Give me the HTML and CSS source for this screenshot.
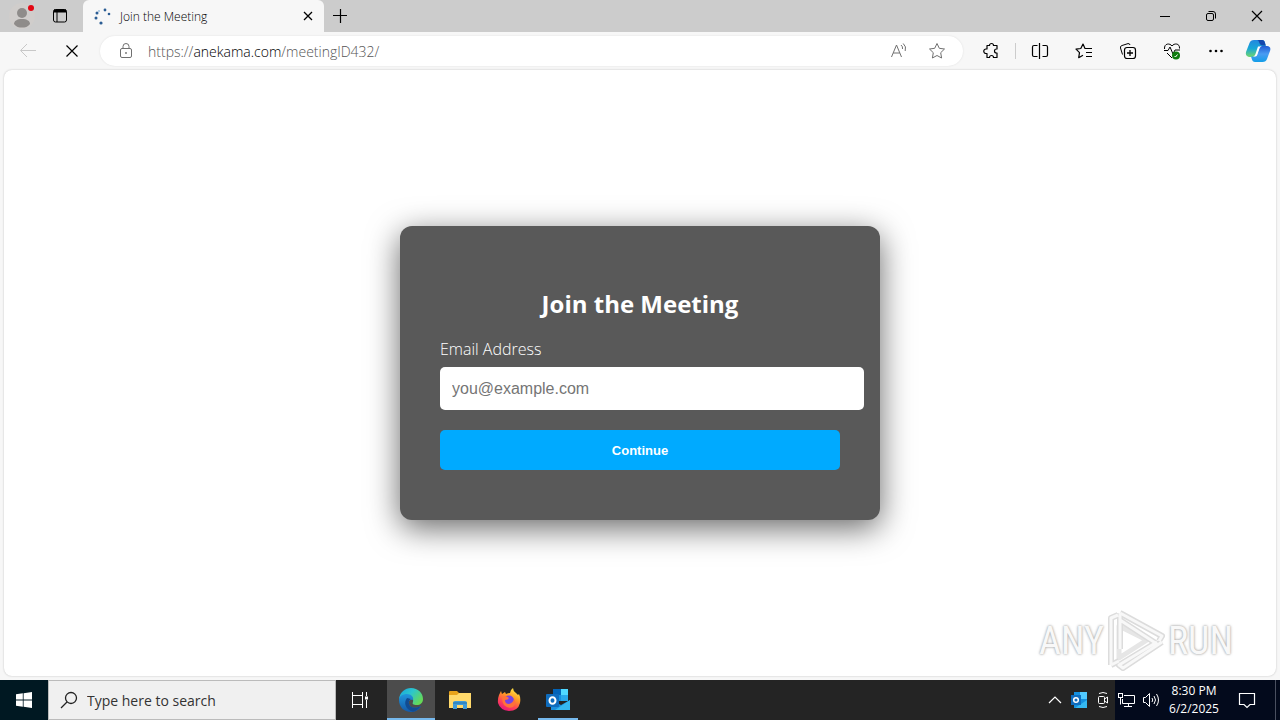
FILE: index.html
```
<!DOCTYPE html>
<html lang="en">
<head>
<meta charset="UTF-8">
<meta name="viewport" content="width=device-width, initial-scale=1.0">
<title>Join the Meeting</title>
<link rel="stylesheet" href="styles.css">
</head>
<body>
<div class="desktop">

  <!-- Tab strip -->
  <header class="tab-strip">
    <button class="profile" aria-label="Profile">
      <svg width="28" height="28" viewBox="0 0 28 28"><circle cx="14" cy="14" r="13" fill="#d0cdcb"/><circle cx="14" cy="11" r="5" fill="#8f8c8a"/><path d="M6 22c0-3 3-5 8-5s8 2 8 5c-2 3-5 3.500-8 3.500S8 25 6 22z" fill="#8f8c8a"/><circle cx="23" cy="6" r="3" fill="#e30613"/></svg>
    </button>
    <button class="tab-actions" aria-label="Tab actions">
      <svg class="line" width="16" height="16" viewBox="0 0 16 16"><rect x="1.500" y="1.500" width="13" height="12.500" rx="2"/><path d="M1.500 3.500h13M5 4v10" /><path d="M2 3h12" stroke-width="3"/></svg>
    </button>
    <div class="tab">
      <svg width="18" height="18" viewBox="0 0 18 18" fill="#2b5d94"><circle cx="3" cy="6" r="1.500"/><circle cx="2" cy="11" r="1.500"/><circle cx="7" cy="16" r="1.600"/><circle cx="11" cy="3" r="1.400"/><circle cx="15" cy="7" r="1.300"/><circle cx="5" cy="4" r="1" fill="#9fc1df"/></svg>
      <span class="tab-title">Join the Meeting</span>
      <button class="tab-close" aria-label="Close tab"><svg class="line" width="10" height="10" viewBox="0 0 10 10"><path d="M1 1l8 8M9 1l-8 8" stroke-width="1.300"/></svg></button>
    </div>
    <button class="new-tab" aria-label="New tab"><svg class="line" width="16" height="16" viewBox="0 0 16 16"><path d="M8.500 1v14M1 7.500h14" stroke-width="1.200"/></svg></button>
    <div class="window-buttons">
      <button aria-label="Minimize"><svg class="line" width="12" height="12" viewBox="0 0 12 12"><path d="M1 6.500h10"/></svg></button>
      <button aria-label="Restore"><svg class="line" width="12" height="12" viewBox="0 0 12 12"><rect x="1.500" y="3.500" width="7" height="7" rx="1.500"/><path d="M3.500 1.500H8q2.500 0 2.500 2.500v4.500"/></svg></button>
      <button aria-label="Close"><svg class="line" width="12" height="12" viewBox="0 0 12 12"><path d="M1 1l10 10M11 1L1 11" stroke-width="1.200"/></svg></button>
    </div>
  </header>

  <!-- Toolbar -->
  <nav class="toolbar">
    <button class="tool back" aria-label="Back"><svg class="line" width="18" height="16" viewBox="0 0 18 16"><path d="M17 7.500H2M8 1L1.500 7.500 8 14"/></svg></button>
    <button class="tool" aria-label="Stop"><svg class="line" width="14" height="14" viewBox="0 0 14 14"><path d="M1.500 1.500l11 11M12.500 1.500l-11 11" stroke-width="1.200"/></svg></button>
    <div class="address">
      <svg class="line lock" width="16" height="18" viewBox="0 0 16 18"><rect x="2.500" y="6.500" width="11" height="9" rx="1.500"/><path d="M5 6.500V4.500a3 3 0 0 1 6 0v2"/><circle cx="8" cy="11" r=".6"/></svg>
      <a class="url" href="#">https://<span class="host">anekama.com</span>/meetingID432/</a>
      <button aria-label="Read aloud"><svg class="line" width="18" height="18" viewBox="0 0 18 18"><path d="M1.500 15L6.500 3l5 12M3.200 11h6.600M11 3q2 1.500 1.500 4M13.200 1.500q3.500 3 2 7.500"/></svg></button>
      <button aria-label="Add to favorites"><svg class="line" width="18" height="18" viewBox="0 0 18 18"><path d="M9 1.500l2.300 4.800 5.200.7-3.800 3.700.9 5.300L9 13.500 4.400 16l.9-5.300L1.500 7l5.200-.7z" stroke-linejoin="round"/></svg></button>
    </div>
    <div class="tools">
      <button class="tool" aria-label="Extensions"><svg class="line" width="18" height="18" viewBox="0 0 18 18"><path d="M5 3.500h2.500a2 2 0 0 1 4 0H15V7h-.5a2 2 0 0 0 0 4h.5v4.500h-3.500a2 2 0 0 0-4 0H5V11.500H4a2.200 2.200 0 0 1 0-4.500h1z" stroke-linejoin="round" stroke-width="1.200"/></svg></button>
      <span class="divider"></span>
      <button class="tool" aria-label="Split screen"><svg class="line" width="18" height="18" viewBox="0 0 18 18"><path d="M6.500 3.500H3Q1.500 3.500 1.500 5v8q0 1.500 1.500 1.500h3.500M11.500 3.500H15q1.500 0 1.500 1.500v8q0 1.500-1.500 1.500h-3.500M8.500 1v16" stroke-width="1.200"/></svg></button>
      <button class="tool" aria-label="Favorites"><svg class="line" width="18" height="18" viewBox="0 0 18 18"><path d="M17 6.500h-7L8 2 5.800 6.500 1 7.200l3.500 3.500-.8 5L8 13.200M11 10.500h6M11 14.500h6" stroke-linejoin="round" stroke-width="1.200"/></svg></button>
      <button class="tool" aria-label="Collections"><svg class="line" width="18" height="18" viewBox="0 0 18 18"><path d="M3.500 12.500L1.500 6q-.5-2 1.500-2.500L9 1.600q1.600-.3 2 1.400"/><rect x="5.500" y="5.500" width="11" height="11" rx="2.500" stroke-width="1.200"/><path d="M11 8v6M8 11h6" stroke-width="1.300"/></svg></button>
      <button class="tool" aria-label="Browser essentials"><svg class="line" width="18" height="18" viewBox="0 0 18 18"><path d="M1.500 7C1 1 7 1 9 4c2-3 8-3 7.500 2.500M4 11l5 5M1 8.500h4L7 5l3 7 2-4h5" stroke-linejoin="round"/><circle cx="13" cy="13.500" r="4" fill="#107c10" stroke="none"/><path d="M11.500 14l1 1 2-2.500" stroke="#fff"/></svg></button>
      <button class="tool" aria-label="Settings and more"><svg width="18" height="18" viewBox="0 0 18 18"><circle cx="3.500" cy="9" r="1.300"/><circle cx="9" cy="9" r="1.300"/><circle cx="14.500" cy="9" r="1.300"/></svg></button>
      <button class="copilot" aria-label="Copilot">
        <svg width="26" height="24" viewBox="0 0 26 24">
          <defs>
            <linearGradient id="cop1" x1="0" y1="0" x2="0" y2="1"><stop offset="0" stop-color="#2387df"/><stop offset=".5" stop-color="#18a7d7"/><stop offset="1" stop-color="#72d66c"/></linearGradient>
            <linearGradient id="cop2" x1="0" y1="0" x2="0" y2="1"><stop offset="0" stop-color="#215bd4"/><stop offset=".5" stop-color="#4a9cf2"/><stop offset="1" stop-color="#139ee8"/></linearGradient>
          </defs>
          <path d="M9 1h8q2.500 0 3 3l.8 3h-4q-2 0-2.800 2l-2.500 7q-.7 2-3 2H4q-4-1-3-5L4.500 4Q5.500 1 9 1z" fill="url(#cop1)"/>
          <path d="M17 1q2.500 0 3 3l.8 2.500H18q-3 0-4-3.500-.5-2-2-2z" fill="#1447ad"/>
          <path d="M17 7h5q4.500.5 3 5l-3 8q-1 3-4.500 3H10q-2.500 0-3.200-3L6 17.500h3q2.300 0 3-2l2.300-6.500q.7-2 2.700-2z" fill="url(#cop2)"/>
          <path d="M13 7.500h3.500q-1.500.5-2 2l-2.300 6.500q-.6 1.500-2.200 1.500H8q1.800-.5 2.300-2l2-6z" fill="#fff"/>
        </svg>
      </button>
    </div>
  </nav>

  <!-- Web page -->
  <main class="page">
    <form class="card">
      <h2>Join the Meeting</h2>
      <label for="email">Email Address</label>
      <input type="email" id="email" name="email" placeholder="you@example.com">
      <button type="button" class="continue">Continue</button>
    </form>
    <div class="watermark">
      <span>ANY</span>
      <svg width="60" height="64" viewBox="0 0 60 64" fill="none" stroke-linejoin="round">
        <path d="M13 17v32l28-18z" stroke="#e6e6e6" stroke-width="5"/>
        <path d="M5 56V9l7-3M5 56l8-4M14 4l42 23-3 5M14 4v36M14 4v7l37 24M56 33L17 59l-4-3 38-23" stroke="#dcdcdc" stroke-width="6"/>
        <path d="M5 56V9l7-3M5 56l8-4M14 4l42 23-3 5M14 4v36M14 4v7l37 24M56 33L17 59l-4-3 38-23" stroke="#f8f8f8" stroke-width="3"/>
      </svg>
      <span>RUN</span>
    </div>
  </main>

  <!-- Windows taskbar -->
  <footer class="taskbar">
    <button class="start" aria-label="Start"><svg width="16" height="16" viewBox="0 0 16 16" fill="#fff"><path d="M0 2.300L6.800 1.300v6.300H0zM7.600 1.200L16 0v7.600H7.600zM0 8.400h6.800v6.300L0 13.700zM7.600 8.400H16V16l-8.400-1.200z"/></svg></button>
    <div class="search">
      <svg class="line" width="18" height="18" viewBox="0 0 18 18"><circle cx="11" cy="7" r="5.500" stroke-width="1.300"/><path d="M7 11l-6 6" stroke-width="1.300"/></svg>
      <input type="text" aria-label="Search" placeholder="Type here to search">
    </div>
    <button class="app" aria-label="Task view"><svg width="18" height="18" viewBox="0 0 18 18" fill="none" stroke="#fff"><path d="M1.500 1v3.500h10V1M1.500 17v-3.500h10V17M15.500 1v4M15.500 9v8"/><rect x="1.500" y="4.500" width="10" height="9"/><path d="M14 7h3" stroke-width="3"/></svg></button>
    <button class="app active" aria-label="Edge">
      <svg width="24" height="24" viewBox="0 0 24 24">
        <defs>
          <linearGradient id="edge1" x1="0" y1="0" x2="1" y2=".6"><stop offset="0" stop-color="#16a4de"/><stop offset=".5" stop-color="#2cc6cd"/><stop offset="1" stop-color="#65d957"/></linearGradient>
          <linearGradient id="edge2" x1="0" y1="0" x2="0" y2="1"><stop offset="0" stop-color="#2096dc"/><stop offset="1" stop-color="#1459a8"/></linearGradient>
        </defs>
        <path d="M0 11C1 4 6 0 12 0c7 0 12 5 12 11 0 4-3 6-6 6-4 0-5-1-4-3 1-4-2-6-6-6-3 0-6 1-8 3z" fill="url(#edge1)"/>
        <path d="M0 12c0-4 4-6 8-6 4 0 7 3 6 6-3-1-5 1-4 4 1 4 6 5 12 2-2 4-6 6-10 6C5 24 0 19 0 12z" fill="url(#edge2)"/>
        <path d="M8 10c-4 5-1 12 6 13.700 3-.5 6-2.700 8-5.700-6 3-11 2-12-2-.7-2.500.3-4 2-5z" fill="#124b91"/>
      </svg>
    </button>
    <button class="app" aria-label="File Explorer"><svg width="22" height="20" viewBox="0 0 22 20"><path d="M0 2q0-1 1-1h7l2 2h11q1 0 1 1v14H0z" fill="#e8a31a"/><path d="M0 5h8l2-2h12v15H0z" fill="#ffd96b"/><path d="M4 19v-6q0-2 2-2h10q2 0 2 2v6h-4v-4H8v4z" fill="#3f9bd8"/><path d="M4 13h14" stroke="#2475ad"/></svg></button>
    <button class="app" aria-label="Firefox">
      <svg width="24" height="24" viewBox="0 0 24 24">
        <defs><linearGradient id="fox" x1=".8" y1="0" x2=".3" y2="1"><stop offset="0" stop-color="#fff04a"/><stop offset=".4" stop-color="#ff9824"/><stop offset=".7" stop-color="#ff4554"/><stop offset="1" stop-color="#e6157c"/></linearGradient></defs>
        <path d="M2 7l2-4 1 3 3-2 1 2q2-1 4-1 0-3 3-5 0 3 3 5l2 2 1-1q2 4 1 9-2 8-11 8Q3 22 1 15q-.5-4 1-8z" fill="url(#fox)"/>
        <circle cx="12" cy="12.500" r="5" fill="#7542e5"/><path d="M5 9q4-2 7 1-1 2-4 2 0 4 4 4 4-1 5-5 3 5-1 8-5 2-9-2-2-3-2-8z" fill="#ff7139"/>
      </svg>
    </button>
    <button class="app running" aria-label="Outlook"><svg width="24" height="24" viewBox="0 0 24 24"><path d="M7 1h15v12H7z" fill="#1490df"/><path d="M15 1h7v6h-7z" fill="#50d9ff"/><path d="M15 7h7v6h-7z" fill="#28a8ea"/><path d="M7 1h8v6H7z" fill="#0364b8"/><path d="M5 22V12l10 5 9-5v10z" fill="#1b8fdc"/><path d="M24 12L9 22h15z" fill="#35b8f1"/><rect y="6" width="13" height="13" rx="1" fill="#0f6cbd"/><ellipse cx="6.500" cy="12.500" rx="3" ry="3.300" fill="none" stroke="#fff" stroke-width="2"/></svg></button>
    <div class="tray">
      <svg width="14" height="8" viewBox="0 0 14 8" fill="none" stroke="#fff" stroke-width="1.200"><path d="M1 7l6-6 6 6"/></svg>
      <svg width="16" height="16" viewBox="0 0 16 16"><path d="M3 0h13v16H3z" fill="#1490df"/><path d="M9 0h7v7H9z" fill="#50c9ff"/><path d="M4 16l12-8v8z" fill="#35b8f1"/><rect y="3" width="10" height="10" fill="#0f6cbd"/><circle cx="5" cy="8" r="2.300" fill="none" stroke="#fff" stroke-width="1.500"/></svg>
      <svg width="14" height="18" viewBox="0 0 14 18" fill="none" stroke="#fff"><rect x="2.500" y="5.500" width="6" height="7" rx="1"/><path d="M8.500 8l3-2v6l-3-2M3 2.500Q7 .5 11 2.500M3 15.500q4 2 8 0"/></svg>
    </div>
    <div class="status">
      <svg width="18" height="16" viewBox="0 0 18 16" fill="none" stroke="#fff"><path d="M6 3.500h10.500v8H4.500V7M10.500 11.500v3M6 14.500h8M2.500 6v6.500"/><rect x=".5" y="1.500" width="4" height="4"/></svg>
      <svg width="18" height="16" viewBox="0 0 18 16" fill="none" stroke="#fff"><path d="M1.500 5.500h2l4-4v13l-4-4h-2zM10 6q1.500 2 0 4M12 4q3 4 0 8M14.500 2q4 6 0 12"/></svg>
      <div class="clock"><span>8:30 PM</span><span>6/2/2025</span></div>
      <svg width="18" height="18" viewBox="0 0 18 18" fill="none" stroke="#fff" stroke-width="1.200"><path d="M1.500 2.500h15v11H12l-3 3-3-3H1.500z"/></svg>
      <span class="show-desktop"></span>
    </div>
  </footer>
</div>
</body>
</html>
```
FILE: styles.css
```
* {
  box-sizing: border-box;
}
body {
  margin: 0;
  font-family: "Open Sans", "Noto Sans", sans-serif;
  background-color: #f7f7f7;
}
button {
  margin: 0;
  padding: 0;
  border: none;
  background: none;
  font-family: inherit;
  color: inherit;
}
svg {
  display: block;
  flex: none;
}
.line {
  fill: none;
  stroke: currentColor;
}
.desktop {
  display: flex;
  flex-direction: column;
  height: 100vh;
}

/* tab strip */
.tab-strip {
  display: flex;
  height: 32px;
  background-color: #cccccc;
}
.profile {
  margin-left: 8px;
}
.tab-actions {
  padding: 0 14px 0 16px;
}
.tab {
  display: flex;
  align-items: center;
  gap: 8px;
  width: 241px;
  padding: 0 11px;
  margin-left: 1px;
  background-color: #f7f7f7;
  border-radius: 6px 6px 0 0;
}
.tab-title {
  flex: 1;
  font-size: 12px;
  font-weight: 300;
}
.new-tab {
  padding: 0 8px;
}
.window-buttons {
  display: flex;
  margin-left: auto;
}
.window-buttons button {
  display: flex;
  align-items: center;
  justify-content: center;
  width: 46px;
}

/* toolbar */
.toolbar {
  display: flex;
  align-items: center;
  height: 38px;
  padding: 0 9px 0 6px;
}
.tool {
  display: flex;
  justify-content: center;
  width: 44px;
}
.back {
  color: #c8c8c8;
}
.address {
  display: flex;
  flex: 1;
  align-items: center;
  gap: 20px;
  height: 30px;
  margin-left: 6px;
  padding: 0 17px 0 18px;
  color: #707070;
  background-color: #fff;
  border-radius: 15px;
  box-shadow: 0 0 2px #ddd;
}
.lock {
  margin-right: -6px;
}
.url {
  flex: 1;
  font-size: 14px;
  font-weight: 300;
  color: #555;
  text-decoration: none;
}
.host {
  color: #000;
}
.tools {
  display: flex;
  align-items: center;
  margin-left: 6px;
}
.divider {
  width: 1px;
  height: 16px;
  margin: 0 2px;
  background-color: #ccc;
}
.copilot {
  margin-left: 7px;
}

/* web page */
.page {
  position: relative;
  display: flex;
  flex: 1;
  align-items: center;
  justify-content: center;
  margin: 0 4px 4px;
  background-color: #fff;
  border-radius: 8px;
  box-shadow: 0 0 2px #bbb;
}
.card {
  width: 480px;
  padding: 60px 40px 50px;
  color: #fff;
  background-color: #595959;
  border-radius: 12px;
  box-shadow: 0 8px 32px rgba(0, 0, 0, 0.6);
}
.card h2 {
  margin: 0 0 16px;
  font-size: 24px;
  line-height: 36px;
  text-align: center;
}
.card label {
  display: block;
  margin-bottom: 7px;
  font-size: 16px;
  font-weight: 300;
  line-height: 22px;
}
/* padding is added on top of the full width */
.card input {
  display: block;
  box-sizing: content-box;
  width: 100%;
  height: 19px;
  margin-bottom: 20px;
  padding: 12px;
  border: none;
  border-radius: 5px;
  font-family: "Liberation Sans", Arial, sans-serif;
  font-size: 16px;
}
.continue {
  width: 100%;
  height: 40px;
  background-color: #00aaff;
  border-radius: 5px;
  font-family: "Liberation Sans", Arial, sans-serif;
  font-size: 13px;
  font-weight: bold;
}
.watermark {
  position: absolute;
  right: 43px;
  bottom: 3px;
  display: flex;
  align-items: center;
  gap: 2px;
  font-family: "Roboto Condensed", "Liberation Sans Narrow", Roboto, sans-serif;
  font-size: 38px;
  color: #f8f8f8;
  text-shadow: 0 0 3px #aaa, 0 0 2px #bbb;
}

/* taskbar */
.taskbar {
  display: flex;
  height: 40px;
  color: #fff;
  background-color: #242424;
}
.start {
  display: flex;
  align-items: center;
  justify-content: center;
  width: 48px;
  background-color: #001822;
}
.search {
  display: flex;
  align-items: center;
  gap: 9px;
  width: 288px;
  padding: 0 11px;
  color: #222;
  background-color: #f0f0f0;
  border: 1px solid #bbb;
}
.search input {
  flex: 1;
  min-width: 0;
  padding: 0;
  border: none;
  background: none;
  font-family: inherit;
  font-size: 14px;
}
.search input::placeholder {
  color: #333;
}
.app {
  display: flex;
  align-items: center;
  justify-content: center;
  width: 48px;
  margin-right: 1px;
}
.active {
  margin-left: 2px;
  background-color: #4c4c4c;
  box-shadow: inset 0 -2px #76b9ed;
}
.running {
  width: 40px;
  margin-left: 4px;
  box-shadow: inset 0 -2px #76b9ed;
}
.tray {
  display: flex;
  align-items: center;
  gap: 9px;
  margin-left: auto;
  padding-right: 5px;
}
.status {
  display: flex;
  align-items: center;
  gap: 6px;
  padding-left: 3px;
  background-color: #030a1c;
}
.clock {
  display: flex;
  flex-direction: column;
  width: 56px;
  margin-right: 10px;
  font-size: 12px;
  line-height: 18px;
  text-align: center;
}
.show-desktop {
  align-self: stretch;
  width: 5px;
  margin-left: 13px;
  border-left: 1px solid #4a5060;
}
```
